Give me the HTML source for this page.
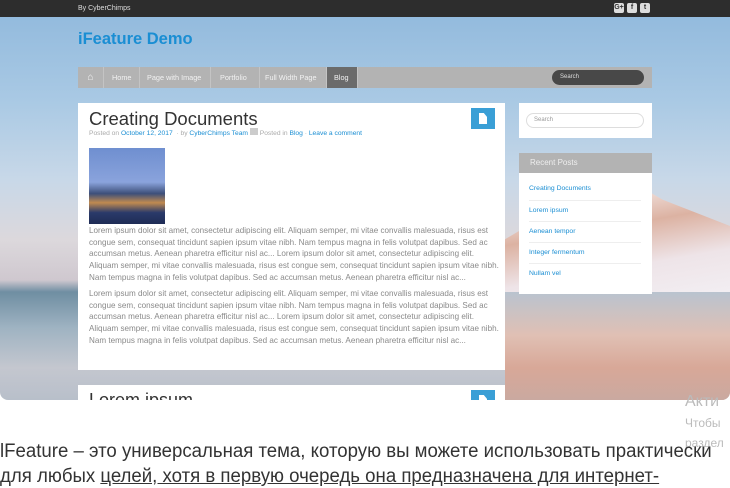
<!DOCTYPE html>
<html><head><meta charset="utf-8"><style>
*{margin:0;padding:0;box-sizing:border-box}
body{width:730px;height:487px;overflow:hidden;background:#fff;font-family:"Liberation Sans",sans-serif;position:relative}
.shot{position:absolute;left:0;top:0;width:730px;height:400px;border-radius:0 0 8px 8px;overflow:hidden;
background:linear-gradient(180deg,#8fb8dc 0%,#a9c9e4 25%,#c8d8e8 45%,#dcd8dc 60%,#cfc8cf 70%,#6f8ea2 73%,#9fb3c2 82%,#c4c7cf 92%,#b8bfca 100%)}
.mtn{position:absolute;left:505px;top:160px;width:225px;height:132px;background:linear-gradient(170deg,#f6eeee 25%,#dcb2a2 50%,#eee4e8 75%,#f2eef2 100%);clip-path:polygon(0 100%,0 60%,15% 45%,45% 5%,70% 30%,100% 50%,100% 100%)}
.refl{position:absolute;left:505px;top:292px;width:225px;height:108px;background:linear-gradient(180deg,#b9c3cf,#e0c0b4 40%,#d8a898 70%,#caa9a0)}
.top{position:absolute;left:0;top:0;width:730px;height:17px;background:#2d2d2d;color:#ddd;font-size:7px;line-height:17px;padding-left:78px}
.soc{position:absolute;top:3px;width:10px;height:10px;background:#ddd;border-radius:2px;color:#333;font-size:7px;line-height:10px;text-align:center;font-weight:bold}
.title{position:absolute;left:78px;top:30px;color:#1a8ed3;font-size:16.5px;font-weight:bold}
.nav{position:absolute;left:78px;top:67px;width:574px;height:21px;background:#b3b3b3;font-size:7.3px;color:#f2f2f2}
.nav span{position:absolute;top:0;height:21px;line-height:21px;border-right:1px solid #c4c4c4}
.srch{position:absolute;left:474px;top:3px;width:92px;height:15px;border-radius:8px;background:#484848;color:#ddd;font-size:6px;line-height:15px;padding-left:8px}
.panel{position:absolute;background:#fff}
.h1{position:absolute;left:11px;top:5px;font-size:18.5px;color:#333}
.meta{position:absolute;left:11px;top:25px;font-size:6.7px;color:#aaa;white-space:nowrap}
.meta b{color:#1a8ed3;font-weight:normal}
.ico{position:absolute;width:24px;height:21px;background:#3a9fd6}
.ico:after{content:"";position:absolute;left:8px;top:5px;width:8px;height:11px;background:#fff;clip-path:polygon(0 0,60% 0,100% 35%,100% 100%,0 100%)}
.txt{position:absolute;left:11px;width:412px;font-size:8.1px;line-height:11.7px;color:#8a8a8a}
.rp{position:absolute;left:10px;font-size:6.8px;color:#1a8ed3}
.rl{position:absolute;left:10px;width:112px;height:1px;background:#eee}
.ru{position:absolute;left:0;font-size:19px;color:#333;white-space:nowrap;transform:scaleX(.98);transform-origin:0 0}
</style></head><body>
<div class="shot">
<div class="mtn"></div><div class="refl"></div>
<div class="top">By CyberChimps</div>
<div class="soc" style="left:614px">G+</div><div class="soc" style="left:627px">f</div><div class="soc" style="left:640px">t</div>
<div class="title">iFeature Demo</div>
<div class="nav">
<span style="left:0;width:26px;text-align:center;font-size:10px">⌂</span>
<span style="left:26px;width:36px;padding-left:8px">Home</span>
<span style="left:62px;width:71px;padding-left:7px">Page with Image</span>
<span style="left:133px;width:49px;padding-left:9px">Portfolio</span>
<span style="left:182px;width:67px;padding-left:5px">Full Width Page</span>
<span style="left:249px;width:31px;padding-left:7px;background:#6b6b6b">Blog</span>
<div class="srch">Search</div>
</div>
<div class="panel" style="left:78px;top:103px;width:427px;height:267px">
<div class="h1">Creating Documents</div>
<div class="meta">Posted on <b>October 12, 2017</b> &nbsp;· by <b>CyberChimps Team</b> <span style="display:inline-block;width:8px;height:7px;background:#ccc"></span> Posted in <b>Blog</b> · <b>Leave a comment</b></div>
<div class="ico" style="left:393px;top:5px"></div>
<div style="position:absolute;left:11px;top:45px;width:76px;height:76px;background:linear-gradient(180deg,#6f8fd0 0%,#8aa3dc 45%,#3d4f7a 60%,#c08a50 72%,#2a3a6a 85%,#1f2c55 100%)"></div>
<div class="txt" style="top:122px">Lorem ipsum dolor sit amet, consectetur adipiscing elit. Aliquam semper, mi vitae convallis malesuada, risus est congue sem, consequat tincidunt sapien ipsum vitae nibh. Nam tempus magna in felis volutpat dapibus. Sed ac accumsan metus. Aenean pharetra efficitur nisl ac... Lorem ipsum dolor sit amet, consectetur adipiscing elit. Aliquam semper, mi vitae convallis malesuada, risus est congue sem, consequat tincidunt sapien ipsum vitae nibh. Nam tempus magna in felis volutpat dapibus. Sed ac accumsan metus. Aenean pharetra efficitur nisl ac...</div>
<div class="txt" style="top:185px">Lorem ipsum dolor sit amet, consectetur adipiscing elit. Aliquam semper, mi vitae convallis malesuada, risus est congue sem, consequat tincidunt sapien ipsum vitae nibh. Nam tempus magna in felis volutpat dapibus. Sed ac accumsan metus. Aenean pharetra efficitur nisl ac... Lorem ipsum dolor sit amet, consectetur adipiscing elit. Aliquam semper, mi vitae convallis malesuada, risus est congue sem, consequat tincidunt sapien ipsum vitae nibh. Nam tempus magna in felis volutpat dapibus. Sed ac accumsan metus. Aenean pharetra efficitur nisl ac...</div>
</div>
<div class="panel" style="left:78px;top:385px;width:427px;height:20px">
<div style="position:absolute;left:11px;top:5px;font-size:18px;color:#333">Lorem ipsum</div>
<div class="ico" style="left:393px;top:5px"></div>
</div>
<div class="panel" style="left:519px;top:103px;width:133px;height:35px">
<div style="position:absolute;left:7px;top:10px;width:118px;height:15px;border:1px solid #ddd;border-radius:8px;font-size:6px;color:#999;line-height:13px;padding-left:7px">Search</div>
</div>
<div class="panel" style="left:519px;top:153px;width:133px;height:141px">
<div style="position:absolute;left:0;top:0;width:133px;height:20px;background:#b3b3b3;color:#eee;font-size:8px;line-height:20px;padding-left:11px">Recent Posts</div>
<div class="rp" style="top:32px">Creating Documents</div><div class="rl" style="top:47px"></div>
<div class="rp" style="top:54px">Lorem ipsum</div><div class="rl" style="top:68px"></div>
<div class="rp" style="top:75px">Aenean tempor</div><div class="rl" style="top:89px"></div>
<div class="rp" style="top:96px">Integer fermentum</div><div class="rl" style="top:110px"></div>
<div class="rp" style="top:117px">Nullam vel</div>
</div>
</div>
<div style="position:absolute;left:685px;top:393px;font-size:16px;color:#bbb">Акти</div>
<div style="position:absolute;left:685px;top:416px;font-size:12px;color:#bbb">Чтобы</div>
<div style="position:absolute;left:685px;top:436px;font-size:12px;color:#bbb">раздел</div>
<div class="ru" style="top:441px">lFeature – это универсальная тема, которую вы можете использовать практически</div>
<div class="ru" style="top:466px">для любых <u>целей, хотя в первую очередь она предназначена для интернет-</u></div>
</body></html>
